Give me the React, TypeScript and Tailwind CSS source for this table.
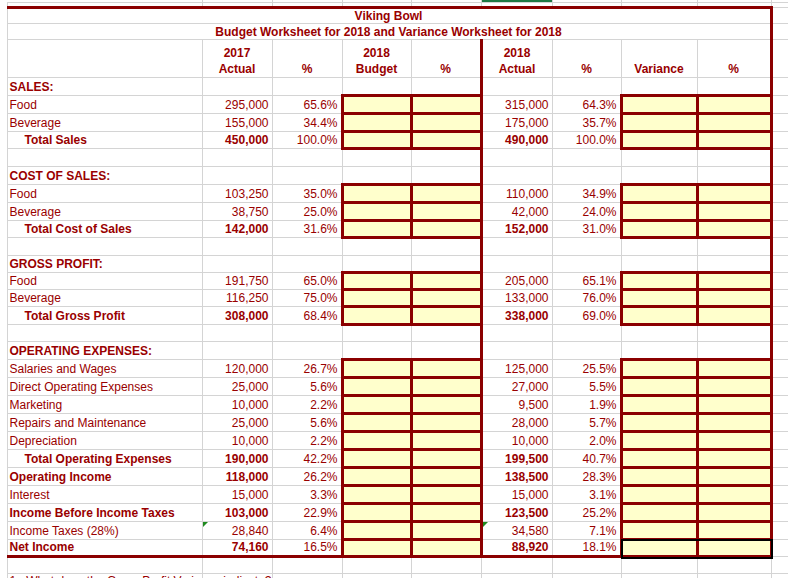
import React from 'react';
import clsx from 'clsx';

type Kind = 'section' | 'item' | 'total' | 'bold' | 'blank';

interface SheetRow {
  label?: string;
  kind: Kind;
  a?: string;
  ap?: string;
  b?: string;
  bp?: string;
  h: string;
  flag?: boolean;
  last?: boolean;
}

const rows: SheetRow[] = [
  { label: 'SALES:', kind: 'section', h: 'h-[18px]' },
  { label: 'Food', kind: 'item', a: '295,000', ap: '65.6%', b: '315,000', bp: '64.3%', h: 'h-[18px]' },
  { label: 'Beverage', kind: 'item', a: '155,000', ap: '34.4%', b: '175,000', bp: '35.7%', h: 'h-[18px]' },
  { label: 'Total Sales', kind: 'total', a: '450,000', ap: '100.0%', b: '490,000', bp: '100.0%', h: 'h-[17px]' },
  { kind: 'blank', h: 'h-[18px]' },
  { label: 'COST OF SALES:', kind: 'section', h: 'h-[18px]' },
  { label: 'Food', kind: 'item', a: '103,250', ap: '35.0%', b: '110,000', bp: '34.9%', h: 'h-[18px]' },
  { label: 'Beverage', kind: 'item', a: '38,750', ap: '25.0%', b: '42,000', bp: '24.0%', h: 'h-[18px]' },
  { label: 'Total Cost of Sales', kind: 'total', a: '142,000', ap: '31.6%', b: '152,000', bp: '31.0%', h: 'h-[17px]' },
  { kind: 'blank', h: 'h-[18px]' },
  { label: 'GROSS PROFIT:', kind: 'section', h: 'h-[17px]' },
  { label: 'Food', kind: 'item', a: '191,750', ap: '65.0%', b: '205,000', bp: '65.1%', h: 'h-[17px]' },
  { label: 'Beverage', kind: 'item', a: '116,250', ap: '75.0%', b: '133,000', bp: '76.0%', h: 'h-[17px]' },
  { label: 'Total Gross Profit', kind: 'total', a: '308,000', ap: '68.4%', b: '338,000', bp: '69.0%', h: 'h-[18px]' },
  { kind: 'blank', h: 'h-[17px]' },
  { label: 'OPERATING EXPENSES:', kind: 'section', h: 'h-[18px]' },
  { label: 'Salaries and Wages', kind: 'item', a: '120,000', ap: '26.7%', b: '125,000', bp: '25.5%', h: 'h-[18px]' },
  { label: 'Direct Operating Expenses', kind: 'item', a: '25,000', ap: '5.6%', b: '27,000', bp: '5.5%', h: 'h-[18px]' },
  { label: 'Marketing', kind: 'item', a: '10,000', ap: '2.2%', b: '9,500', bp: '1.9%', h: 'h-[18px]' },
  { label: 'Repairs and Maintenance', kind: 'item', a: '25,000', ap: '5.6%', b: '28,000', bp: '5.7%', h: 'h-[18px]' },
  { label: 'Depreciation', kind: 'item', a: '10,000', ap: '2.2%', b: '10,000', bp: '2.0%', h: 'h-[18px]' },
  { label: 'Total Operating Expenses', kind: 'total', a: '190,000', ap: '42.2%', b: '199,500', bp: '40.7%', h: 'h-[18px]' },
  { label: 'Operating Income', kind: 'bold', a: '118,000', ap: '26.2%', b: '138,500', bp: '28.3%', h: 'h-[18px]' },
  { label: 'Interest', kind: 'item', a: '15,000', ap: '3.3%', b: '15,000', bp: '3.1%', h: 'h-[18px]' },
  { label: 'Income Before Income Taxes', kind: 'bold', a: '103,000', ap: '22.9%', b: '123,500', bp: '25.2%', h: 'h-[18px]' },
  { label: 'Income Taxes (28%)', kind: 'item', a: '28,840', ap: '6.4%', b: '34,580', bp: '7.1%', h: 'h-[18px]', flag: true },
  { label: 'Net Income', kind: 'bold', a: '74,160', ap: '16.5%', b: '88,920', bp: '18.1%', h: 'h-[17px]', last: true },
];

const grid = 'border border-[#d4d4d4]';
const redRight = 'border-r-[3px] border-r-[#8b0000]';
const redBottom = 'border-b-[3px] border-b-[#8b0000]';
const yellow = 'border-[3px] border-[#8b0000] bg-[#ffffcc]';
const text = 'align-bottom pb-[1px] whitespace-nowrap';

function Flag() {
  return (
    <span className="absolute left-0 top-0 h-0 w-0 border-solid border-t-[5px] border-r-[5px] border-t-[#1f8a1f] border-r-transparent" />
  );
}

function Stub() {
  return <td className="border-r border-[#d4d4d4]" />;
}

function DataRow({ r }: { r: SheetRow }) {
  const input = r.kind !== 'section' && r.kind !== 'blank';
  const boldNum = r.kind === 'total' || r.kind === 'bold';
  const boldLabel = r.kind !== 'item';

  return (
    <tr className={r.h}>
      <Stub />
      <td
        className={clsx(
          grid,
          text,
          r.kind === 'total' ? 'pl-[17px]' : 'pl-[2px]',
          boldLabel && 'font-bold',
          r.last && redBottom
        )}
      >
        {r.label}
      </td>
      <td className={clsx(grid, text, 'pr-[3px] text-right', boldNum && 'font-bold', r.flag && 'relative', r.last && redBottom)}>
        {r.flag && <Flag />}
        {r.a}
      </td>
      <td className={clsx(grid, text, 'pr-[3px] text-right', r.last && redBottom)}>{r.ap}</td>
      <td className={input ? yellow : grid} />
      <td className={input ? yellow : clsx(grid, redRight)} />
      <td className={clsx(grid, text, 'pr-[3px] text-right', boldNum && 'font-bold', r.flag && 'relative', r.last && redBottom)}>
        {r.flag && <Flag />}
        {r.b}
      </td>
      <td className={clsx(grid, text, 'pr-[3px] text-right', r.last && redBottom)}>{r.bp}</td>
      <td className={clsx(input ? yellow : grid, r.last && 'relative')}>
        {/* selection box over the net income variance cells */}
        {r.last && (
          <div className="absolute -left-[2px] -top-[2px] h-[20px] w-[152px] border-2 border-black" />
        )}
      </td>
      <td className={input ? yellow : clsx(grid, redRight)} />
      <td className={grid} />
    </tr>
  );
}

function PlainRow({ h, children }: { h: string; children?: React.ReactNode }) {
  return (
    <tr className={h}>
      <Stub />
      <td className={clsx(grid, 'relative')}>{children}</td>
      <td className={grid} />
      <td className={grid} />
      <td className={grid} />
      <td className={grid} />
      <td className={grid} />
      <td className={grid} />
      <td className={grid} />
      <td className={grid} />
      <td className={grid} />
    </tr>
  );
}

export default function App() {
  const head = 'border border-[#d4d4d4] align-bottom text-center font-bold leading-[16px]';

  return (
    <div className="h-[578px] w-[788px] overflow-hidden bg-white font-['Liberation_Sans',Arial,sans-serif] text-[12px] leading-[14px] text-[#990000]">
      <table className="w-[788px] table-fixed border-collapse">
        <colgroup>
          <col className="w-[7px]" />
          <col className="w-[195px]" />
          <col className="w-[70px]" />
          <col className="w-[70px]" />
          <col className="w-[69px]" />
          <col className="w-[70px]" />
          <col className="w-[71px]" />
          <col className="w-[69px]" />
          <col className="w-[76px]" />
          <col className="w-[74px]" />
          <col className="w-[17px]" />
        </colgroup>
        <tbody>
          {/* column header remnant, F is the selected column */}
          <tr className="h-[2px]">
            <td />
            <td className="border-r border-b border-[#d4d4d4]" />
            <td className="border-r border-b border-[#d4d4d4]" />
            <td className="border-r border-b border-[#d4d4d4]" />
            <td className="border-r border-b border-[#d4d4d4]" />
            <td className="border-r border-b border-[#d4d4d4]" />
            <td className="border-r border-b border-[#d4d4d4] bg-[#1e7a45]" />
            <td className="border-r border-b border-[#d4d4d4]" />
            <td className="border-r border-b border-[#d4d4d4]" />
            <td className="border-r border-b border-[#d4d4d4]" />
            <td className="border-r border-b border-[#d4d4d4]" />
          </tr>
          <PlainRow h="h-[5px]" />

          {/* titles */}
          <tr className="h-[16px]">
            <Stub />
            <td colSpan={9} className={clsx(grid, redRight, 'border-t-[3px] border-t-[#8b0000] align-bottom text-center font-bold')}>
              Viking Bowl
            </td>
            <td className={grid} />
          </tr>
          <tr className="h-[16px]">
            <Stub />
            <td colSpan={9} className={clsx(grid, redRight, 'align-bottom text-center font-bold')}>
              Budget Worksheet for 2018 and Variance Worksheet for 2018
            </td>
            <td className={grid} />
          </tr>

          {/* column headings */}
          <tr className="h-[38px]">
            <Stub />
            <td className={grid} />
            <td className={head}>
              2017
              <br />
              Actual
            </td>
            <td className={head}>%</td>
            <td className={head}>
              2018
              <br />
              Budget
            </td>
            <td className={clsx(head, redRight)}>%</td>
            <td className={head}>
              2018
              <br />
              Actual
            </td>
            <td className={head}>%</td>
            <td className={head}>Variance</td>
            <td className={clsx(head, redRight)}>%</td>
            <td className={grid} />
          </tr>

          {rows.map((r, i) => (
            <DataRow key={i} r={r} />
          ))}

          <PlainRow h="h-[17px]" />
          <PlainRow h="h-[18px]">
            <span className="absolute left-[2px] top-0 whitespace-nowrap">
              1.&nbsp;&nbsp;What does the Gross Profit Variance indicate?
            </span>
          </PlainRow>
        </tbody>
      </table>
    </div>
  );
}
